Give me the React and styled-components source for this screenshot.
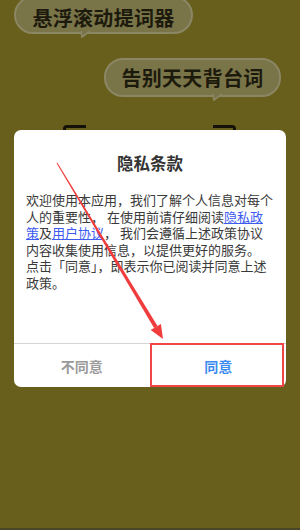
import React from "react";
import styled, { createGlobalStyle } from "styled-components";

const Global = createGlobalStyle`
  html, body { margin: 0; padding: 0; }
  body { font-family: "Noto Sans CJK SC", "Noto Sans", sans-serif; }
  * { box-sizing: border-box; }
`;

const Screen = styled.div`
  position: relative;
  width: 300px;
  height: 530px;
  overflow: hidden;
  background: #695f1c;
  border-bottom: 2px solid #4a4728;
  display: flex;
  flex-direction: column;
`;

const Bubble = styled.div`
  position: relative;
  width: ${(p) => p.$w}px;
  height: ${(p) => p.$h}px;
  margin: ${(p) => p.$m};
  border-radius: 19px;
  background: #7a7449;
  border: 2px solid #8b8664;
  display: flex;
  align-items: center;
  justify-content: center;
  font-size: 20px;
  font-weight: 700;
  color: #1c1a0c;
  letter-spacing: 0.3px;
  padding-top: ${(p) => p.$pt || 0}px;
`;

const Tail = styled.svg`
  position: absolute;
  left: ${(p) => p.$x}px;
  bottom: -6px;
  width: 12px;
  height: 7px;
`;

const BracketRow = styled.div`
  display: flex;
  gap: 127px;
  padding-left: 63px;
  margin-top: 28px;
`;

const Bracket = styled.span`
  display: block;
  width: 23px;
  height: 14px;
  border-top: 3px solid #141208;
  ${(p) =>
    p.$side === "left"
      ? "border-left: 3px solid #141208; border-top-left-radius: 4px;"
      : "border-right: 3px solid #141208; border-top-right-radius: 4px;"}
`;

const Dialog = styled.div`
  position: absolute;
  left: 14px;
  top: 130px;
  width: 272px;
  height: 257px;
  background: #fff;
  border-radius: 7px;
  display: flex;
  flex-direction: column;
`;

const Title = styled.div`
  padding-top: 21px;
  line-height: 24px;
  font-size: 16.5px;
  font-weight: 700;
  color: #333;
  text-align: center;
`;

const Body = styled.p`
  flex: 1;
  margin: 17px 0 0;
  padding: 0 12px;
  font-size: 13px;
  line-height: 16.5px;
  color: #3a3a3a;
`;

const Link = styled.a`
  color: #3d5af1;
  text-decoration: underline;
`;

const Buttons = styled.div`
  display: flex;
  height: 44px;
  border-top: 1px solid #d4d4d4;
`;

const Btn = styled.div`
  flex: 1;
  display: flex;
  align-items: center;
  justify-content: center;
  font-size: 14px;
  font-weight: 700;
  color: ${(p) => (p.$primary ? "#3b8cf0" : "#9a9a9a")};
  ${(p) => (p.$primary ? "border-left: 1px solid #d4d4d4;" : "")}
`;

const Highlight = styled.div`
  position: absolute;
  left: 136px;
  top: 213px;
  width: 134px;
  height: 44px;
  border: 2px solid #f04545;
  pointer-events: none;
`;

const ArrowLayer = styled.svg`
  position: absolute;
  left: 0;
  top: 0;
  width: 300px;
  height: 530px;
  pointer-events: none;
`;

function SpeechTail({ x }) {
  return (
    <Tail $x={x} viewBox="0 0 12 7">
      <path d="M1 0 L2 6 L10 0 Z" fill="#7a7449" />
      <path d="M1 0 L2 6 L10 0" fill="none" stroke="#8b8664" strokeWidth="1.6" />
    </Tail>
  );
}

export default function App() {
  return (
    <>
      <Global />
      <Screen>
        <Bubble $w={179} $h={38} $m="-4px 0 0 14px" $pt={4}>
          悬浮滚动提词器
          <SpeechTail x={64} />
        </Bubble>
        <Bubble $w={177} $h={39} $m="24px 0 0 104px">
          告别天天背台词
          <SpeechTail x={106} />
        </Bubble>
        <BracketRow>
          <Bracket $side="left" />
          <Bracket $side="right" />
        </BracketRow>

        <Dialog>
          <Title>隐私条款</Title>
          <Body>
            欢迎使用本应用，我们了解个人信息对每个人的重要性， 在使用前请仔细阅读
            <Link>隐私政策</Link>及<Link>用户协议</Link>， 我们会遵循上述政策协议内容收集使用信息，以提供更好的服务。
            <br />
            点击「同意」，即表示你已阅读并同意上述政策。
          </Body>
          <Buttons>
            <Btn>不同意</Btn>
            <Btn $primary>同意</Btn>
          </Buttons>
          <Highlight />
        </Dialog>

        <ArrowLayer viewBox="0 0 300 530">
          <polygon
            points="56.57,163.26 57.43,162.74 157.52,325.97 154.08,328.03"
            fill="#f03c3c"
          />
          <polygon points="163,339 150.7,330.1 160.9,323.9" fill="#f03c3c" />
        </ArrowLayer>
      </Screen>
    </>
  );
}
